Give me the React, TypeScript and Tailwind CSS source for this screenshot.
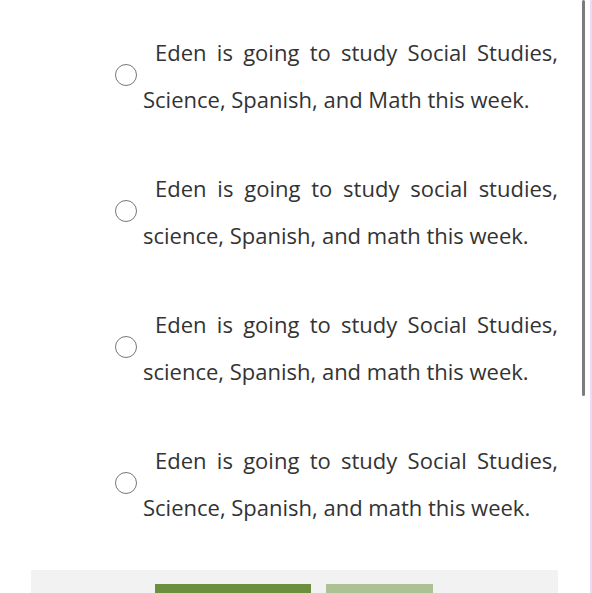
import React from 'react';

const options = [
    'Eden is going to study Social Studies, Science, Spanish, and Math this week.',
    'Eden is going to study social studies, science, Spanish, and math this week.',
    'Eden is going to study Social Studies, science, Spanish, and math this week.',
    'Eden is going to study Social Studies, Science, Spanish, and math this week.',
];

const App: React.FC = () => {
    return (
        <div className="relative w-full h-[593px] overflow-hidden bg-white border-r-2 border-[#eadcf6]" style={{ fontFamily: '"Open Sans", sans-serif' }}>
            <div className="ml-[31px] w-[527px]">
                <div className="pl-[84px] pt-[29px] flex flex-col gap-[42px]">
                    {options.map((text, i) => (
                        <label key={i} className="flex items-center gap-[6px] cursor-pointer">
                            <span className="w-[22px] h-[22px] shrink-0 rounded-full border-[1.5px] border-[#777] bg-white mb-[2px]" />
                            <span className="w-[415px] text-[22px] leading-[47px] text-[#333] text-justify indent-[12px]">
                                {text}
                            </span>
                        </label>
                    ))}
                </div>
                <div className="mt-[39px] h-[60px] bg-[#f2f2f2] pt-[14px] pl-[124px] flex gap-[15px]">
                    <button className="w-[156px] h-[40px] bg-[#6b8f3d]" />
                    <button className="w-[107px] h-[40px] bg-[#acc292]" />
                </div>
            </div>
            <div className="absolute right-[5px] top-0 w-[3px] h-[396px] rounded-full bg-[#7c7c7c]" />
        </div>
    );
};

export default App;
